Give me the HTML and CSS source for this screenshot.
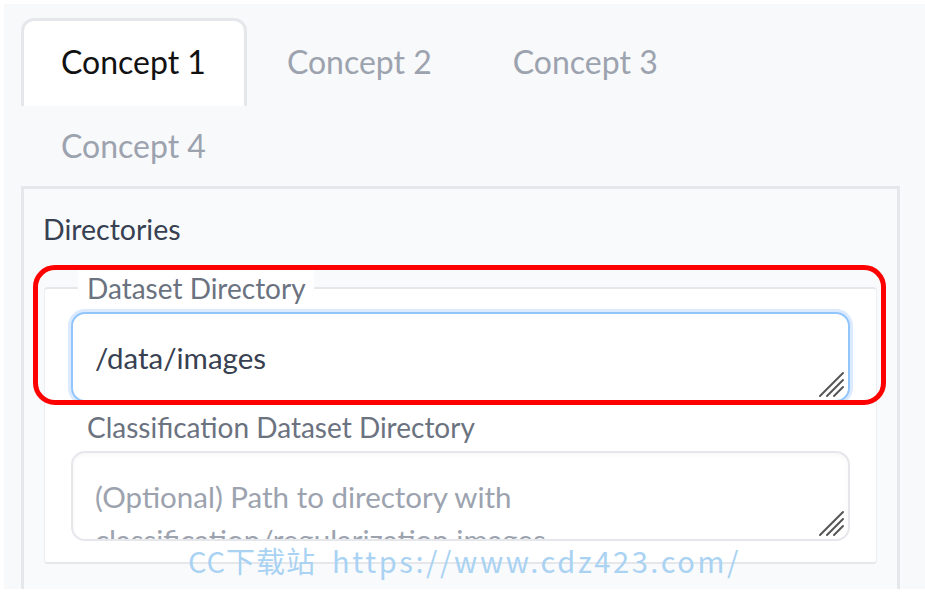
FILE: index.html
```html
<!DOCTYPE html>
<html lang="en">
<head>
<meta charset="utf-8">
<title>Concepts</title>
<link rel="stylesheet" href="styles.css">
</head>
<body>
<div class="frame">
  <div class="tabs">
    <div class="tab selected">Concept 1</div>
    <div class="tab">Concept 2</div>
    <div class="tab">Concept 3</div>
    <div class="tab">Concept 4</div>
  </div>
  <div class="panel">
    <div class="section-title">Directories</div>
    <div class="card">
      <div class="label first">Dataset Directory</div>
      <div class="field focused">
        <div class="value">/data/images</div>
        <svg class="grip" viewBox="0 0 28 28" width="28" height="28"><g stroke="#555" stroke-width="2" stroke-linecap="round"><line x1="3" y1="26" x2="26" y2="3"/><line x1="10" y1="26" x2="26" y2="10"/><line x1="17" y1="26" x2="26" y2="17"/></g></svg>
      </div>
      <div class="label">Classification Dataset Directory</div>
      <div class="field">
        <div class="value placeholder">(Optional) Path to directory with classification/regularization images</div>
        <svg class="grip" viewBox="0 0 28 28" width="28" height="28"><g stroke="#555" stroke-width="2" stroke-linecap="round"><line x1="3" y1="26" x2="26" y2="3"/><line x1="10" y1="26" x2="26" y2="10"/><line x1="17" y1="26" x2="26" y2="17"/></g></svg>
      </div>
    </div>
  </div>
  <div class="highlight"></div>
  <div class="watermark"><span class="wm-cn">CC下载站</span><span class="wm-url">https://www.cdz423.com/</span></div>
</div>
</body>
</html>
```

FILE: styles.css
```css
html, body {
  margin: 0;
  padding: 0;
  background: #ffffff;
}

body {
  font-family: "Lato", "Open Sans", sans-serif;
  overflow: hidden;
}

.frame {
  position: relative;
  margin: 4px 0 0 4px;
  height: 585px;
  background: #f8f9fa;
  padding: 14px 0 0 17px;
  box-sizing: border-box;
  overflow: hidden;
}

.tabs {
  display: flex;
  flex-wrap: wrap;
  width: 879px;
}

.tab {
  box-sizing: border-box;
  height: 84px;
  padding: 9px 38px 0 37px;
  border: 3px solid transparent;
  border-bottom: none;
  font-size: 32px;
  line-height: 64px;
  color: #9ca3af;
}

.tab.selected {
  height: 88px;
  margin-bottom: -4px;
  background: #ffffff;
  border-color: #e5e7eb;
  border-radius: 13px 13px 0 0;
  color: #111111;
  position: relative;
  z-index: 1;
}

.panel {
  width: 879px;
  box-sizing: border-box;
  height: 420px;
  border: 3px solid #e5e7eb;
  background: #f9fafb;
  padding: 22px 20px 0 20px;
}

.section-title {
  font-size: 28.5px;
  line-height: 36px;
  color: #374151;
  margin-left: -1px;
}

.card {
  margin-top: 40px;
  background: #ffffff;
  border-top: 2px solid #e5e7eb;
  border-left: 1px solid #eceef1;
  border-right: 1px solid #eceef1;
  border-bottom: 2px solid #e5e7eb;
  border-radius: 4px;
  padding: 0 26px 21px 26px;
}

.label {
  display: table;
  margin-left: 7px;
  padding: 0 8px 0 9px;
  font-size: 28px;
  line-height: 36px;
  color: #6b7280;
  background: #ffffff;
  margin-top: 7px;
}

.label.first {
  margin-top: -19px;
}

.field {
  position: relative;
  box-sizing: border-box;
  height: 90px;
  margin-top: 6px;
  border: 2px solid #e5e7eb;
  border-radius: 14px;
  padding: 22px 22px 0 22px;
  overflow: hidden;
  background: #ffffff;
  box-shadow: inset 0 2px 4px rgba(0,0,0,0.03);
}

.field.focused {
  border-color: #93c5fd;
  box-shadow: 0 0 0 3px #dbeafe;
  overflow: visible;
}

.value {
  font-size: 29.5px;
  line-height: 43px;
  color: #374151;
}

.value.placeholder {
  color: #9ca3af;
  width: 540px;
}

.grip {
  position: absolute;
  right: 3px;
  bottom: 2px;
}

.highlight {
  position: absolute;
  left: 29px;
  top: 261px;
  width: 853px;
  height: 140px;
  box-sizing: border-box;
  border: 5px solid #ff0000;
  border-radius: 22px;
  z-index: 2;
}

.watermark {
  position: absolute;
  left: 184px;
  top: 536px;
  display: flex;
  gap: 16px;
  font-family: "Noto Sans CJK SC", "Open Sans", sans-serif;
  font-size: 29px;
  line-height: 40px;
  color: #a9d2f3;
  white-space: nowrap;
  z-index: 3;
}

.wm-cn {
  letter-spacing: 1px;
}

.wm-url {
  letter-spacing: 2.6px;
}
```
